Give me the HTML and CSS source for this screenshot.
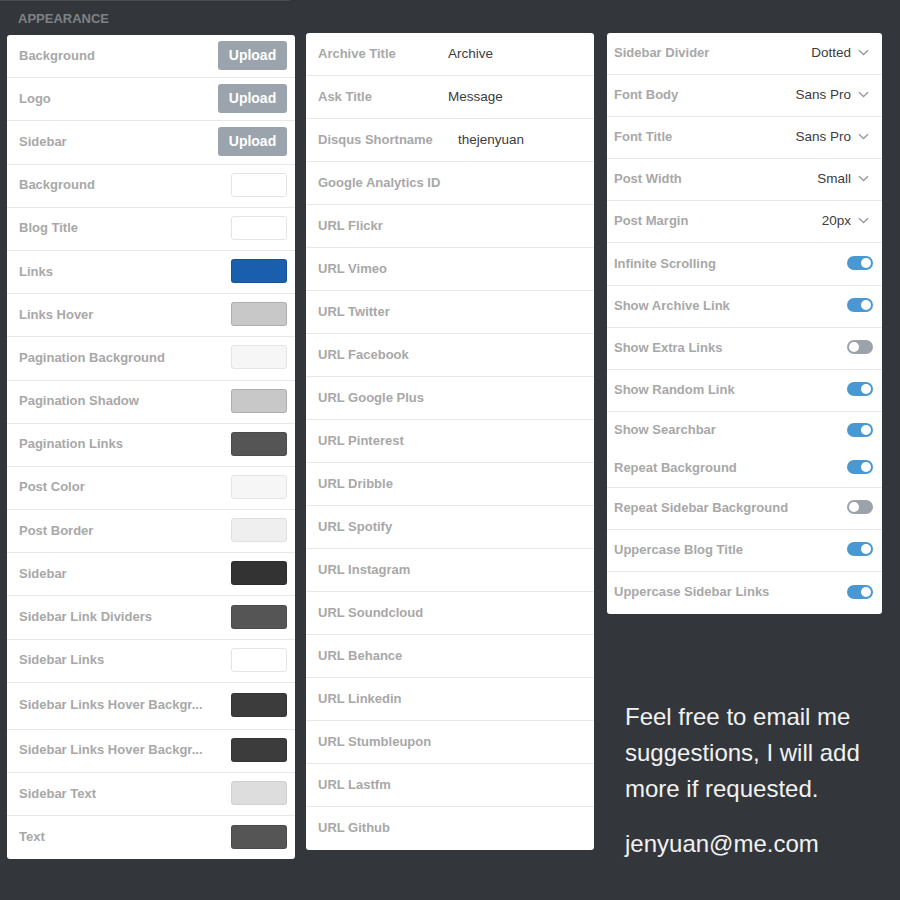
FILE: index.html
```html
<!DOCTYPE html>
<html>
<head>
<meta charset="utf-8">
<link rel="stylesheet" href="styles.css">
</head>
<body>
<div class="topline"></div>
<div class="page">
  <div class="col col1">
    <div class="heading">APPEARANCE</div>
    <div class="card">
      <div class="row r1"><span class="label">Background</span><span class="btn">Upload</span></div>
      <div class="row r1"><span class="label">Logo</span><span class="btn">Upload</span></div>
      <div class="row r1"><span class="label">Sidebar</span><span class="btn">Upload</span></div>
      <div class="row r1"><span class="label">Background</span><span class="sw c-white"></span></div>
      <div class="row r1"><span class="label">Blog Title</span><span class="sw c-white"></span></div>
      <div class="row r1"><span class="label">Links</span><span class="sw c-blue"></span></div>
      <div class="row r1"><span class="label">Links Hover</span><span class="sw c-grey"></span></div>
      <div class="row r1"><span class="label">Pagination Background</span><span class="sw c-offwhite"></span></div>
      <div class="row r1"><span class="label">Pagination Shadow</span><span class="sw c-grey"></span></div>
      <div class="row r1"><span class="label">Pagination Links</span><span class="sw c-dim"></span></div>
      <div class="row r1"><span class="label">Post Color</span><span class="sw c-offwhite"></span></div>
      <div class="row r1"><span class="label">Post Border</span><span class="sw c-light"></span></div>
      <div class="row r1"><span class="label">Sidebar</span><span class="sw c-dark"></span></div>
      <div class="row r1"><span class="label">Sidebar Link Dividers</span><span class="sw c-dim"></span></div>
      <div class="row r1"><span class="label">Sidebar Links</span><span class="sw c-white"></span></div>
      <div class="row r1 tall"><span class="label">Sidebar Links Hover Backgr...</span><span class="sw c-charcoal"></span></div>
      <div class="row r1"><span class="label">Sidebar Links Hover Backgr...</span><span class="sw c-charcoal"></span></div>
      <div class="row r1"><span class="label">Sidebar Text</span><span class="sw c-silver"></span></div>
      <div class="row r1 last"><span class="label">Text</span><span class="sw c-dim"></span></div>
    </div>
  </div>

  <div class="col col2">
    <div class="card">
      <div class="row r2"><span class="label fixed">Archive Title</span><span class="val">Archive</span></div>
      <div class="row r2"><span class="label fixed">Ask Title</span><span class="val">Message</span></div>
      <div class="row r2"><span class="label fixed">Disqus Shortname</span><span class="val shifted">thejenyuan</span></div>
      <div class="row r2"><span class="label">Google Analytics ID</span></div>
      <div class="row r2"><span class="label">URL Flickr</span></div>
      <div class="row r2"><span class="label">URL Vimeo</span></div>
      <div class="row r2"><span class="label">URL Twitter</span></div>
      <div class="row r2"><span class="label">URL Facebook</span></div>
      <div class="row r2"><span class="label">URL Google Plus</span></div>
      <div class="row r2"><span class="label">URL Pinterest</span></div>
      <div class="row r2"><span class="label">URL Dribble</span></div>
      <div class="row r2"><span class="label">URL Spotify</span></div>
      <div class="row r2"><span class="label">URL Instagram</span></div>
      <div class="row r2"><span class="label">URL Soundcloud</span></div>
      <div class="row r2"><span class="label">URL Behance</span></div>
      <div class="row r2"><span class="label">URL Linkedin</span></div>
      <div class="row r2"><span class="label">URL Stumbleupon</span></div>
      <div class="row r2"><span class="label">URL Lastfm</span></div>
      <div class="row r2 last"><span class="label">URL Github</span></div>
    </div>
  </div>

  <div class="col col3">
    <div class="card">
      <div class="row r3"><span class="label">Sidebar Divider</span><span class="select"><span class="val">Dotted</span><svg class="chev" width="11" height="7" viewBox="0 0 11 7"><path d="M1 1.2l4.5 4.3L10 1.2" fill="none" stroke="#9a9a9a" stroke-width="1.4"/></svg></span></div>
      <div class="row r3"><span class="label">Font Body</span><span class="select"><span class="val">Sans Pro</span><svg class="chev" width="11" height="7" viewBox="0 0 11 7"><path d="M1 1.2l4.5 4.3L10 1.2" fill="none" stroke="#9a9a9a" stroke-width="1.4"/></svg></span></div>
      <div class="row r3"><span class="label">Font Title</span><span class="select"><span class="val">Sans Pro</span><svg class="chev" width="11" height="7" viewBox="0 0 11 7"><path d="M1 1.2l4.5 4.3L10 1.2" fill="none" stroke="#9a9a9a" stroke-width="1.4"/></svg></span></div>
      <div class="row r3"><span class="label">Post Width</span><span class="select"><span class="val">Small</span><svg class="chev" width="11" height="7" viewBox="0 0 11 7"><path d="M1 1.2l4.5 4.3L10 1.2" fill="none" stroke="#9a9a9a" stroke-width="1.4"/></svg></span></div>
      <div class="row r3"><span class="label">Post Margin</span><span class="select"><span class="val">20px</span><svg class="chev" width="11" height="7" viewBox="0 0 11 7"><path d="M1 1.2l4.5 4.3L10 1.2" fill="none" stroke="#9a9a9a" stroke-width="1.4"/></svg></span></div>
      <div class="row r3"><span class="label">Infinite Scrolling</span><span class="toggle on"></span></div>
      <div class="row r3"><span class="label">Show Archive Link</span><span class="toggle on"></span></div>
      <div class="row r3"><span class="label">Show Extra Links</span><span class="toggle off"></span></div>
      <div class="row r3"><span class="label">Show Random Link</span><span class="toggle on"></span></div>
      <div class="row r3 short nodiv"><span class="label">Show Searchbar</span><span class="toggle on"></span></div>
      <div class="row r3 short stray"><span class="label">Repeat Background</span><span class="toggle on"></span></div>
      <div class="row r3"><span class="label">Repeat Sidebar Background</span><span class="toggle off"></span></div>
      <div class="row r3"><span class="label">Uppercase Blog Title</span><span class="toggle on"></span></div>
      <div class="row r3 last"><span class="label">Uppercase Sidebar Links</span><span class="toggle on"></span></div>
    </div>
    <div class="note">
      <p>Feel free to email me suggestions, I will add more if requested.</p>
      <p class="email">jenyuan@me.com</p>
    </div>
  </div>
</div>
</body>
</html>
```

FILE: styles.css
```css
html, body {
  margin: 0;
  padding: 0;
}
body {
  background: #33373b;
  font-family: "Liberation Sans", Arial, sans-serif;
  width: 900px;
  height: 900px;
  overflow: hidden;
}
.topline {
  width: 290px;
  height: 1px;
  background: #4a4e52;
}
.page {
  display: flex;
  align-items: flex-start;
  padding-left: 7px;
}
.col1 { width: 288px; }
.col2 { width: 288px; margin-left: 11px; margin-top: 32px; }
.col3 { width: 275px; margin-left: 13px; margin-top: 32px; }

.heading {
  box-sizing: border-box;
  height: 34px;
  padding: 10px 0 0 11px;
  font-size: 13px;
  line-height: 16px;
  font-weight: bold;
  color: #7e8286;
}
.card {
  background: #fff;
  border-radius: 3px;
  overflow: hidden;
}
.row {
  box-sizing: border-box;
  display: flex;
  align-items: center;
  border-bottom: 1px solid #e8e8e8;
  position: relative;
  padding-bottom: 2px;
}
.row.last { border-bottom: none; }
.label {
  font-size: 13px;
  font-weight: bold;
  color: #a8a8a8;
  white-space: nowrap;
}
.val {
  font-size: 13.5px;
  color: #3c3c3c;
  white-space: nowrap;
}

/* column 1 */
.r1 {
  height: 43.2px;
  padding-left: 12px;
  padding-right: 8px;
  justify-content: space-between;
}
.r1.tall { height: 47px; }
.btn {
  width: 69px;
  height: 29px;
  border-radius: 3px;
  background: #9ba3ad;
  color: #fff;
  font-size: 14px;
  font-weight: bold;
  display: flex;
  align-items: center;
  justify-content: center;
}
.sw {
  box-sizing: border-box;
  width: 56px;
  height: 24px;
  border-radius: 3px;
  border: 1px solid rgba(0, 0, 0, 0.13);
}
.c-white { background: #ffffff; border-color: #e4e4e4; }
.c-offwhite { background: #f6f6f6; border-color: #e4e4e4; }
.c-light { background: #efefef; border-color: #e0e0e0; }
.c-silver { background: #dddddd; border-color: #d0d0d0; }
.c-grey { background: #c8c8c8; }
.c-blue { background: #1a5fad; }
.c-dim { background: #555555; }
.c-dark { background: #333333; }
.c-charcoal { background: #3c3c3c; }

/* column 2 */
.r2 {
  height: 43px;
  padding-left: 12px;
  padding-right: 12px;
}
.label.fixed {
  width: 130px;
  flex-shrink: 0;
}
.val.shifted { margin-left: 10px; }

/* column 3 */
.r3 {
  height: 42.1px;
  padding-left: 7px;
  padding-right: 9px;
  justify-content: space-between;
}
.r3.short { height: 38px; }
.r3.nodiv { border-bottom: none; }
.r3.last { height: 41.5px; }
.stray::after {
  content: "";
  position: absolute;
  right: -6px;
  top: 1px;
  width: 6px;
  height: 1px;
  background: #c8c8c8;
}
.select {
  display: flex;
  align-items: center;
  gap: 7px;
  padding-right: 4px;
}
.chev { display: block; }
.toggle {
  box-sizing: border-box;
  width: 26px;
  height: 14px;
  border-radius: 7px;
  position: relative;
  display: block;
}
.toggle::after {
  content: "";
  position: absolute;
  top: 2px;
  width: 10px;
  height: 10px;
  border-radius: 50%;
  background: #fff;
}
.toggle.on { background: #4a98d2; }
.toggle.on::after { right: 2px; }
.toggle.off { background: #9ba2aa; }
.toggle.off::after { left: 2px; }

.note {
  margin-top: 85px;
  padding-left: 18px;
  color: #f2f2f2;
  font-size: 24px;
  line-height: 36px;
}
.note p { margin: 0; }
.note .email { margin-top: 19px; }
```
